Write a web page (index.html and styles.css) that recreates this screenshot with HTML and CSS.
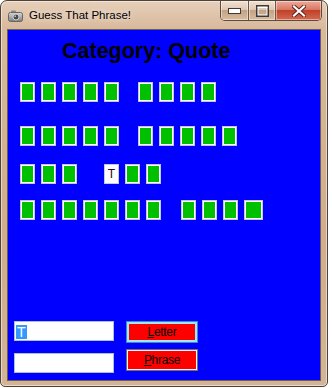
FILE: index.html
```html
<!DOCTYPE html>
<html lang="en">
<head>
  <meta charset="UTF-8" />
  <title>Guess That Phrase!</title>
  <link rel="stylesheet" href="styles.css">
</head>
<body>

  <div class="window">
    <div class="titlebar">
      <svg class="app-icon" width="15" height="12" viewBox="0 0 15 12">
        <defs>
          <linearGradient id="cam" x1="0" y1="0" x2="0" y2="1">
            <stop offset="0" stop-color="#d8d8d8" />
            <stop offset="1" stop-color="#7c7c7c" />
          </linearGradient>
        </defs>
        <rect x="3" y="0.5" width="5" height="3" rx="1" fill="#8a8a8a" />
        <rect x="0.5" y="2.5" width="14" height="9" rx="2" fill="url(#cam)" stroke="#666" />
        <circle cx="8" cy="7" r="3" fill="#4a4a4a" stroke="#cfcfcf" />
        <circle cx="7.2" cy="6.2" r="0.9" fill="#bbb" />
      </svg>
      <span class="title">Guess That Phrase!</span>

      <div class="caption">
        <div class="cap-btn">
          <svg width="13" height="6" viewBox="0 0 13 6">
            <rect x="0.5" y="0.5" width="12" height="5" fill="#fff" stroke="#3a3a3a" />
          </svg>
        </div>
        <div class="cap-btn">
          <svg width="13" height="12" viewBox="0 0 13 12">
            <rect x="1" y="1" width="11" height="10" fill="none" stroke="#3a3a3a" stroke-width="2" />
            <rect x="2" y="2.5" width="9" height="7.5" fill="none" stroke="#fff" stroke-width="1" />
            <rect x="1.5" y="1.5" width="10" height="1.5" fill="#fff" />
          </svg>
        </div>
        <div class="cap-btn close">
          <svg width="14" height="12" viewBox="0 0 14 12">
            <path d="M2 1.5 L12 10.5 M12 1.5 L2 10.5" stroke="#5a2018" stroke-width="4" stroke-linecap="square" />
            <path d="M2 1.5 L12 10.5 M12 1.5 L2 10.5" stroke="#fff" stroke-width="2.2" stroke-linecap="square" />
          </svg>
        </div>
      </div>
    </div>

    <div class="client">
      <div class="category">Category: Quote</div>

      <div class="board">
        <div class="row r1">
          <div class="word">
            <span class="tile"></span><span class="tile"></span><span class="tile"></span><span class="tile"></span><span class="tile"></span>
          </div>
          <div class="word gap-s">
            <span class="tile"></span><span class="tile"></span><span class="tile"></span><span class="tile"></span>
          </div>
        </div>

        <div class="row r2">
          <div class="word">
            <span class="tile"></span><span class="tile"></span><span class="tile"></span><span class="tile"></span><span class="tile"></span>
          </div>
          <div class="word gap-s">
            <span class="tile"></span><span class="tile"></span><span class="tile"></span><span class="tile"></span><span class="tile"></span>
          </div>
        </div>

        <div class="row r3">
          <div class="word">
            <span class="tile"></span><span class="tile"></span><span class="tile"></span>
          </div>
          <div class="word gap-l">
            <span class="tile shown">T</span><span class="tile"></span><span class="tile"></span>
          </div>
        </div>

        <div class="row r4">
          <div class="word">
            <span class="tile"></span><span class="tile"></span><span class="tile"></span><span class="tile"></span><span class="tile"></span><span class="tile"></span><span class="tile"></span>
          </div>
          <div class="word gap-m">
            <span class="tile"></span><span class="tile"></span><span class="tile"></span><span class="tile wide"></span>
          </div>
        </div>
      </div>

      <div class="controls">
        <div class="inputs">
          <div class="textbox"><span class="sel">T</span></div>
          <div class="textbox"></div>
        </div>
        <div class="buttons">
          <button class="btn focused"><u>L</u>etter</button>
          <button class="btn"><u>P</u>hrase</button>
        </div>
      </div>
    </div>
  </div>

</body>
</html>
```

FILE: styles.css
```css
* {
  box-sizing: border-box;
  margin: 0;
  padding: 0;
}

body {
  background-color: #ffffff;
  font-family: 'Liberation Sans', Arial, sans-serif;
}

/* window frame */

.window {
  width: 328px;
  height: 387px;
  border: 1px solid #4f4236;
  border-radius: 7px 7px 5px 5px;
  background: linear-gradient(180deg, #e6cfb9 0, #d8b99c 28px, #cfad8e 60%, #d3b496 100%);
  box-shadow: inset 0 0 0 1px rgba(255, 255, 255, 0.5);
  display: flex;
  flex-direction: column;
  overflow: hidden;
}

.titlebar {
  height: 28px;
  display: flex;
  align-items: center;
  padding-left: 7px;
  flex: none;
}

.app-icon {
  margin-right: 6px;
  margin-top: 1px;
}

.title {
  font-size: 11.5px;
  color: #000;
  text-shadow: 0 0 6px rgba(255, 255, 255, 0.9);
}

.caption {
  margin-left: auto;
  margin-right: 5px;
  align-self: flex-start;
  display: flex;
  height: 20px;
  border: 1px solid #5e4b3c;
  border-top: none;
  border-radius: 0 0 5px 5px;
  overflow: hidden;
}

.cap-btn {
  width: 27px;
  display: flex;
  align-items: center;
  justify-content: center;
  background: linear-gradient(180deg, #f1e2d4 0, #e0c7b0 45%, #c4a283 50%, #d8bc9f 100%);
  box-shadow: inset 0 0 0 1px rgba(255, 255, 255, 0.45);
}

.cap-btn + .cap-btn {
  border-left: 1px solid #6b5544;
}

.cap-btn.close {
  width: 46px;
  background: linear-gradient(180deg, #eeaa9a 0, #d97862 45%, #c2412b 50%, #d2694f 100%);
}

/* client area */

.client {
  margin: 0 6px;
  height: 352px;
  flex: none;
  border: 1px solid #6e5c4c;
  background-color: #0000ff;
  display: flex;
  flex-direction: column;
}

.category {
  margin: 9px 0 0 54px;
  font-size: 21.5px;
  line-height: 25px;
  font-weight: bold;
  color: #000;
}

.board {
  margin-left: 12px;
}

.row {
  display: flex;
  height: 20px;
}

.r1 { margin-top: 18px; }
.r2 { margin-top: 24px; }
.r3 { margin-top: 18px; }
.r4 { margin-top: 16px; }

.word {
  display: flex;
  gap: 6px;
}

.gap-s { margin-left: 19px; }
.gap-m { margin-left: 20px; }
.gap-l { margin-left: 27px; }

.tile {
  width: 15px;
  height: 20px;
  border: 1px solid #c6c6e4;
  box-shadow: inset 0 0 0 1px #ffffff;
  background-color: #00c000;
}

.tile.wide {
  width: 19px;
}

.tile.shown {
  background-color: #ffffff;
  color: #300030;
  font-size: 12px;
  display: flex;
  align-items: center;
  justify-content: center;
}

/* bottom controls */

.controls {
  margin-top: auto;
  padding: 0 0 7px 6px;
  display: flex;
}

.inputs {
  width: 100px;
  display: flex;
  flex-direction: column;
  gap: 12px;
}

.textbox {
  height: 20px;
  border: 1px solid #a9c0de;
  background-color: #ffffff;
  padding: 1px;
}

.sel {
  display: inline-block;
  height: 14px;
  padding: 0 1px;
  background-color: #3399ff;
  color: #ffffff;
  font-size: 14px;
  line-height: 14px;
}

.buttons {
  margin-left: 12px;
  display: flex;
  flex-direction: column;
  gap: 6px;
}

.btn {
  width: 72px;
  height: 22px;
  border: 1px solid #707070;
  box-shadow: inset 0 0 0 1px #f4f4f4;
  background-color: #ff0000;
  color: #000;
  font-family: 'Liberation Sans', Arial, sans-serif;
  font-size: 12px;
  letter-spacing: -0.3px;
  cursor: pointer;
}

.btn.focused {
  border-color: #3c8cbf;
  box-shadow: inset 0 0 0 2px #9ee6fb;
}
```
